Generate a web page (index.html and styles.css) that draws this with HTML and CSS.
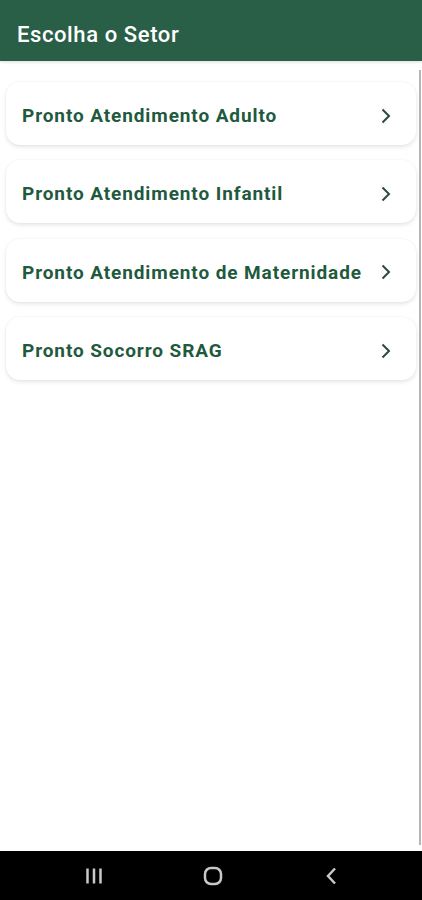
FILE: index.html
```html
<!DOCTYPE html>
<html lang="pt-BR">

<head>
    <meta charset="UTF-8" />
    <meta name="viewport" content="width=device-width, initial-scale=1.0" />
    <title>Escolha o Setor</title>
    <link rel="stylesheet" href="styles.css">
</head>

<body>

    <header class="app-bar">
        <h1>Escolha o Setor</h1>
    </header>

    <main class="content">
        <ul class="sector-list">
            <li class="sector-card">
                <span>Pronto Atendimento Adulto</span>
                <svg class="chevron" viewBox="0 0 12 18"><path d="M2.5 2.5l6.5 6.5-6.5 6.5" /></svg>
            </li>
            <li class="sector-card">
                <span>Pronto Atendimento Infantil</span>
                <svg class="chevron" viewBox="0 0 12 18"><path d="M2.5 2.5l6.5 6.5-6.5 6.5" /></svg>
            </li>
            <li class="sector-card">
                <span>Pronto Atendimento de Maternidade</span>
                <svg class="chevron" viewBox="0 0 12 18"><path d="M2.5 2.5l6.5 6.5-6.5 6.5" /></svg>
            </li>
            <li class="sector-card">
                <span>Pronto Socorro SRAG</span>
                <svg class="chevron" viewBox="0 0 12 18"><path d="M2.5 2.5l6.5 6.5-6.5 6.5" /></svg>
            </li>
        </ul>
        <div class="scrollbar"></div>
    </main>

    <nav class="nav-bar">
        <svg class="nav-icon" viewBox="0 0 20 20"><path d="M2.5 2.5v15M9 2.5v15M15.5 2.5v15" /></svg>
        <svg class="nav-icon" viewBox="0 0 20 20"><rect x="2" y="2" width="16" height="16" rx="6" /></svg>
        <svg class="nav-icon" viewBox="0 0 20 20"><path d="M14 2.5l-7 7.5 7 7.5" /></svg>
    </nav>

</body>

</html>
```

FILE: styles.css
```css
body {
    margin: 0;
    font-family: Roboto, "Noto Sans", sans-serif;
    background-color: #ffffff;
    height: 900px;
    display: flex;
    flex-direction: column;
}

.app-bar {
    height: 61px;
    background-color: #2a5f47;
    display: flex;
    align-items: center;
    padding: 0 17px;
    box-shadow: 0 1px 3px rgba(0, 0, 0, 0.15);
}

.app-bar h1 {
    margin: 0;
    padding-top: 8px;
    font-size: 22px;
    font-weight: 500;
    letter-spacing: 0.6px;
    color: #ffffff;
}

.content {
    flex: 1;
    position: relative;
}

.sector-list {
    list-style: none;
    margin: 0;
    padding: 21px 6px 0 6px;
    display: flex;
    flex-direction: column;
    gap: 15.4px;
}

.sector-card {
    height: 63px;
    display: flex;
    align-items: center;
    justify-content: space-between;
    padding: 4px 24px 0 16px;
    box-sizing: border-box;
    border-radius: 14px;
    background-color: #ffffff;
    box-shadow: 0 2px 4px rgba(0, 0, 0, 0.10), 0 0 2px rgba(0, 0, 0, 0.05);
    font-size: 19px;
    font-weight: 700;
    letter-spacing: 0.9px;
    color: #1f5a3e;
}

.chevron {
    width: 12px;
    height: 18px;
    fill: none;
    stroke: #2d4a3c;
    stroke-width: 2;
}

.scrollbar {
    position: absolute;
    top: 9px;
    bottom: 6px;
    right: 1px;
    width: 2px;
    background-color: #b5b5b5;
}

.nav-bar {
    height: 49px;
    background-color: #000000;
    display: flex;
    justify-content: space-between;
    align-items: center;
    padding: 0 81px 0 85px;
}

.nav-icon {
    width: 20px;
    height: 20px;
    fill: none;
    stroke: #c8c8c8;
    stroke-width: 2.5;
}
```
